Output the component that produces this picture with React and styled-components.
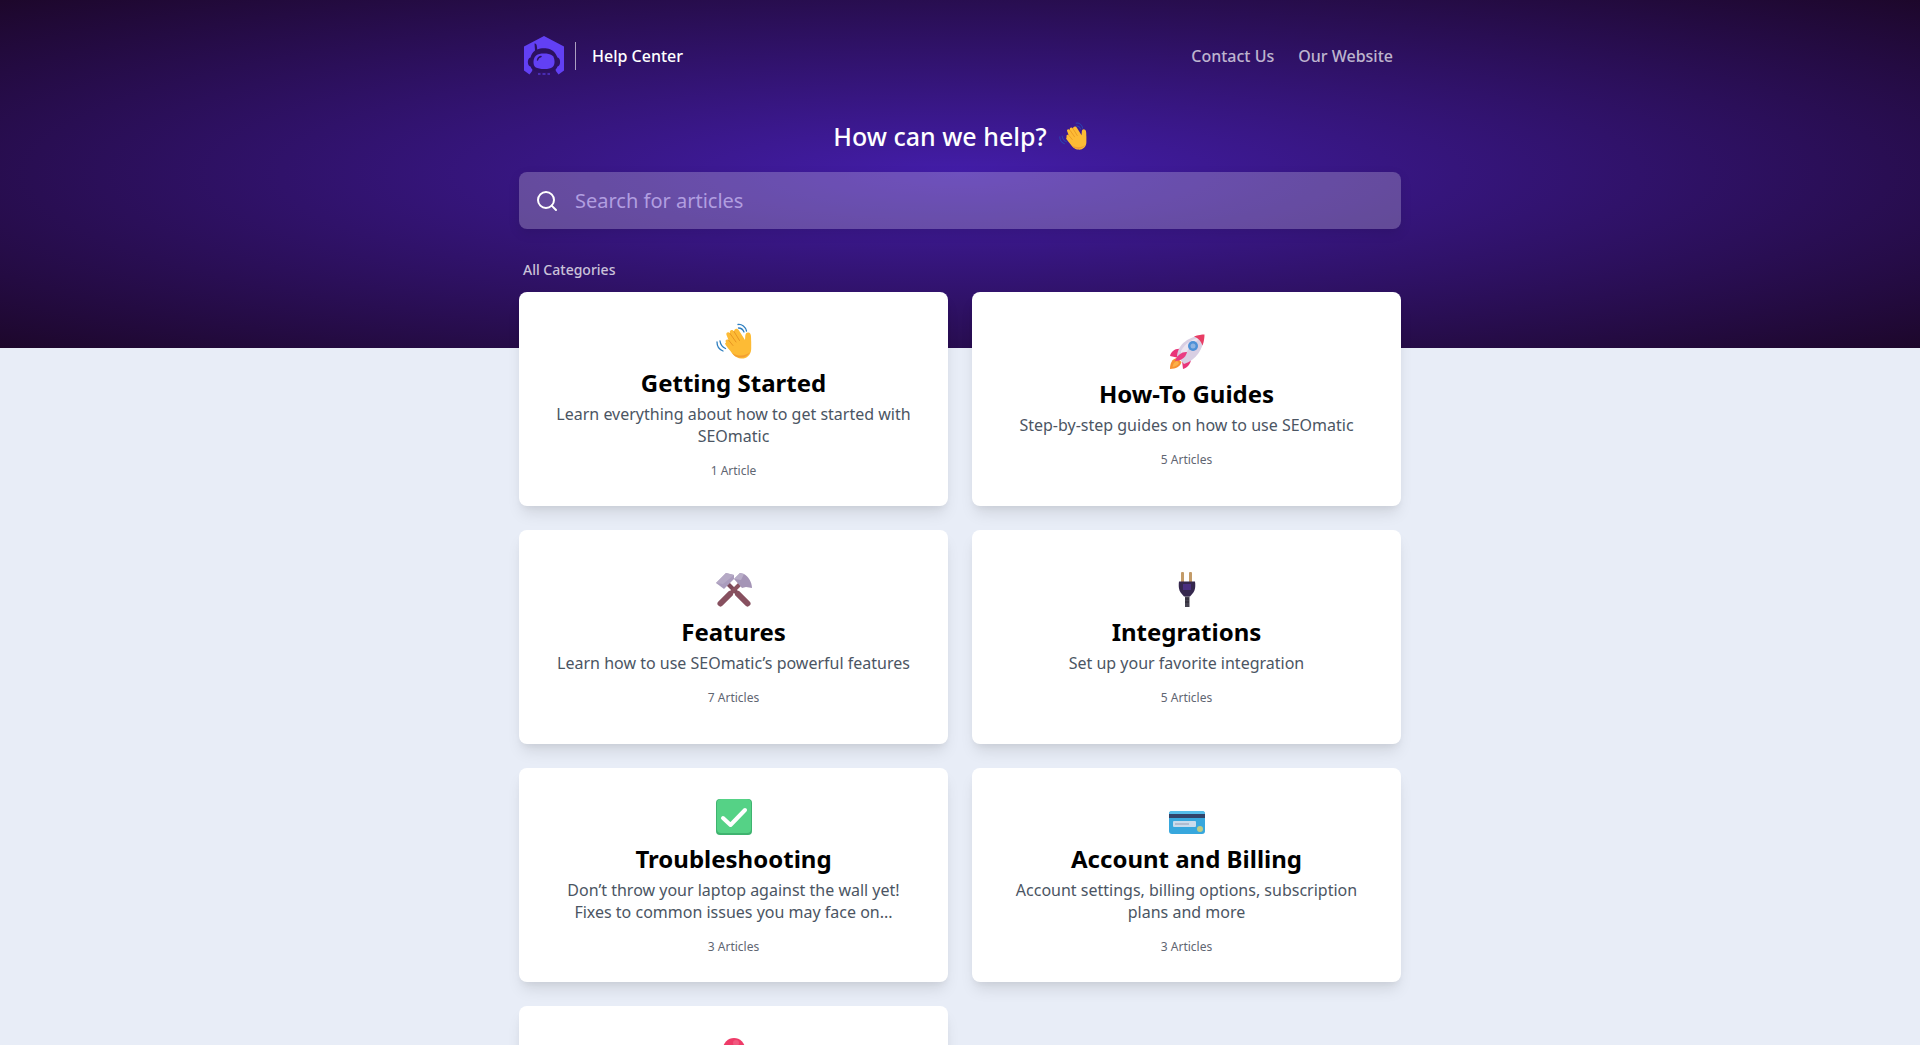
import React from 'react';

// Styles & Icons
import styled, { createGlobalStyle } from 'styled-components';
import { Search } from 'lucide-react';

const Logo = () => (
  <svg width="42" height="42" viewBox="0 0 42 42" aria-hidden="true">
    <path
      d="M21 1 41 11.500V35.500L35.500 39.500C34 37.500 32.500 36 32 33H10C9.500 36 8 37.500 6.500 39.500L1 35.500V11.500Z"
      fill="#6240f4"
    />
    <path
      d="M11.500 8.500C13.500 8 14 10 14.200 14.500C19 12.500 28 12.500 32 18C33.500 20 34 21.500 34.500 22.500C38 23 38 31 34.500 31.500C33 36 29 37 21 37C13 37 9 36 7.500 31.500C4 31 4 23 7.500 22.500C8 20 9.500 17.500 12 15.500Z"
      fill="#2c1160"
    />
    <path
      d="M21 18.500C28 18.500 31.500 20.500 31.500 26.500C31.500 32 29 34 21.500 34C13 34 10.500 32 10.500 27C10.500 21 14 18.500 21 18.500Z"
      fill="#6240f4"
    />
    <path d="M14.500 25C14.800 23 16 22 18 21.500" fill="none" stroke="#2c1160" strokeWidth="1.500" strokeLinecap="round" />
    <path d="M15 39h2.500M19.500 39h3M24.500 39h2.500" stroke="#5236cc" strokeWidth="1.500" />
  </svg>
);

const WaveIcon = ({ size = 36, lines = '#2f7fc0' }) => (
  <svg width={size} height={size} viewBox="0 0 36 36" aria-hidden="true">
    <g fill="none" stroke={lines} strokeWidth="1.300" strokeLinecap="round">
      <path d="M22 1.500C26 1 29.500 4 30.500 8M22.500 5C25 5 27 6.500 28 9" />
      <path d="M1 19C1 23.500 3 26.500 7 28M4 18C4.500 21.500 6 24 9.500 25.500" />
    </g>
    <path
      d="M10 19.500C8.500 17 11 15.500 12.500 17L10.500 12C9.500 9.500 12.500 8 14 10.500C13 7.500 16 5.500 18 8.500C18 5.500 21.500 4.500 23 7.500L29 17C29.500 14 28.500 9 32.500 9.500C35.500 10 35 14 35.200 19V26C35 32.500 30 36 25 35.500C19.500 35 16.500 31 14 27.500C12 25 9.500 22.500 9 20.500Z"
      fill="#fdbb35"
    />
    <path
      d="M14 10.500 20 19M18 8.500 23.500 17.500M12.500 17 17 22.500"
      fill="none"
      stroke="#e89522"
      strokeLinecap="round"
    />
    <path d="M16 30C20 36 30 36.500 34 29C30 33 23 34 16 30Z" fill="#f29e32" />
  </svg>
);

const RocketIcon = () => (
  <svg width="36" height="36" viewBox="0 0 36 36" aria-hidden="true">
    <path d="M8 24C3 25 1 29 1 35C7 34.500 11 33 12.500 28Z" fill="#f79132" />
    <path d="M8 27C5 28 4 30 3.500 33C7 32.500 9 31 10 29Z" fill="#fbb04a" />
    <path d="M12 15C6 14 2 18 1 22L10 24ZM22 25C22 30 18 34 14 35L13 27Z" fill="#e93578" />
    <path d="M8 22C9 10 20 2 35 1C35 15 27 26 15 30Z" fill="#d9cfe3" />
    <path d="M12 17C16 9 25 4 33 3C27 7 19 13 13 26Z" fill="#ece5f0" />
    <path d="M25 2.500C29 1 33 .500 35.500 .500C35.500 3.500 35 8 33.500 11.500C32 7 29.500 4.500 25 2.500Z" fill="#e83d64" />
    <path d="M18 18C13 17.500 8 21 6 27C11 27 17 24 18 18Z" fill="#ea3c82" />
    <circle cx="24" cy="12" r="5" fill="#4e91d7" />
    <circle cx="24" cy="12" r="2.500" fill="#8fb4e2" />
  </svg>
);

const HammerIcon = () => (
  <svg width="36" height="36" viewBox="0 0 36 36" aria-hidden="true">
    <g strokeLinecap="round">
      <path d="M12 12 31 31" stroke="#7c4858" strokeWidth="4" />
      <path d="M24 12 5 31" stroke="#8a5260" strokeWidth="4" />
      <path d="M22 22 31.500 31.500M14 22 4.500 31.500" stroke="#87505f" strokeWidth="6" />
    </g>
    <path d="M0 11 10 1 18 3 18 7 8 17Z" fill="#aa9cbd" />
    <path d="M0 11 10 1 18 3 7 12Z" fill="#b5a9c5" />
    <path d="M18 7 24 1 28 2C32 4 36 10 36 16L30 15 26 16Z" fill="#a494b6" />
    <path d="M18 7 24 1 28 2 25 8Z" fill="#b8adc8" />
  </svg>
);

const PlugIcon = () => (
  <svg width="36" height="36" viewBox="0 0 36 36" aria-hidden="true">
    <rect x="12" y="0" width="3" height="11" rx="1" fill="#c39b68" />
    <rect x="20" y="0" width="3" height="11" rx="1" fill="#c39b68" />
    <path d="M10 9.500H26C26.500 13 26.500 18 24 21L21 24.500H15L12 21C9.500 18 9.500 13 10 9.500Z" fill="#35274d" />
    <path d="M14 12H22V18H14Z" fill="#4a2f80" />
    <path d="M16 24.500H20.500V35H16Z" fill="#44414f" />
    <path d="M16 27H20M16 30H20" stroke="#292431" />
  </svg>
);

const CheckIcon = () => (
  <svg width="36" height="36" viewBox="0 0 36 36" aria-hidden="true">
    <rect width="36" height="36" rx="4" fill="#3fb36f" />
    <rect x="1" y="0" width="34" height="34" rx="4" fill="#55d286" />
    <path d="M7 19 14.500 26 29 11" fill="none" stroke="#fff" strokeWidth="4" strokeLinecap="round" strokeLinejoin="round" />
  </svg>
);

const BillingIcon = () => (
  <svg width="36" height="36" viewBox="0 0 36 36" aria-hidden="true">
    <rect y="12" width="36" height="23" rx="3" fill="#37a7dd" />
    <path d="M3 12H33A3 3 0 0 1 36 15H0A3 3 0 0 1 3 12Z" fill="#55bdea" />
    <path d="M0 15H36V19H0Z" fill="#31436a" />
    <rect x="4" y="22" width="23" height="6" rx="1" fill="#c9dcec" />
    <path d="M6 25H20" stroke="#a6b2c7" strokeWidth="1.500" />
    <circle cx="31" cy="30" r="3" fill="#bdcc87" />
  </svg>
);

const PinIcon = () => (
  <svg width="36" height="36" viewBox="0 0 36 36" aria-hidden="true">
    <path d="M17 22H19L18.500 36H17.500Z" fill="#9b9aa5" />
    <circle cx="18" cy="15" r="11" fill="#ee3b68" />
    <circle cx="20" cy="9" r="3" fill="#f2587f" />
  </svg>
);

const categories = [
  {
    icon: <WaveIcon />,
    title: 'Getting Started',
    text: 'Learn everything about how to get started with SEOmatic',
    count: '1 Article',
  },
  {
    icon: <RocketIcon />,
    title: 'How-To Guides',
    text: 'Step-by-step guides on how to use SEOmatic',
    count: '5 Articles',
  },
  {
    icon: <HammerIcon />,
    title: 'Features',
    text: 'Learn how to use SEOmatic’s powerful features',
    count: '7 Articles',
  },
  {
    icon: <PlugIcon />,
    title: 'Integrations',
    text: 'Set up your favorite integration',
    count: '5 Articles',
  },
  {
    icon: <CheckIcon />,
    title: 'Troubleshooting',
    text: 'Don’t throw your laptop against the wall yet! Fixes to common issues you may face on...',
    count: '3 Articles',
  },
  {
    icon: <BillingIcon />,
    title: 'Account and Billing',
    text: 'Account settings, billing options, subscription plans and more',
    count: '3 Articles',
  },
];

const App = () => {
  return (
    <>
      <GlobalStyle />
      <Header>
        <Container>
          <Nav>
            <Brand href="/">
              <Logo />
              <Divider />
              <span>Help Center</span>
            </Brand>
            <NavLinks>
              <NavLink href="/contact">Contact Us</NavLink>
              <NavLink href="/website">Our Website</NavLink>
            </NavLinks>
          </Nav>
          <Heading>
            How can we help?
            <WaveIcon size={28} lines="#2a44b0" />
          </Heading>
          <SearchBox>
            <Search size={24} strokeWidth={2} />
            <SearchInput type="search" placeholder="Search for articles" aria-label="Search for articles" />
          </SearchBox>
          <SectionTitle>All Categories</SectionTitle>
        </Container>
      </Header>
      <Main>
        <Grid>
          {categories.map(({ icon, title, text, count }) => (
            <Card href="/" key={title}>
              <CardIcon>{icon}</CardIcon>
              <CardTitle>{title}</CardTitle>
              <CardText>{text}</CardText>
              <CardCount>{count}</CardCount>
            </Card>
          ))}
          <Card href="/" $top>
            <CardIcon>
              <PinIcon />
            </CardIcon>
          </Card>
        </Grid>
      </Main>
    </>
  );
};

export default App;

const GlobalStyle = createGlobalStyle`
  * {
    box-sizing: border-box;
  }

  body {
    margin: 0;
    background: #e8edf7;
    font-family: 'Segoe UI', 'Noto Sans', sans-serif;
  }
`;

const Container = styled.div`
  max-width: 882px;
  margin: 0 auto;
`;

const Header = styled.header`
  padding: 32px 16px 68px;
  background: radial-gradient(#431da9, #1d072b);
`;

const Nav = styled.nav`
  display: flex;
  align-items: center;
  justify-content: space-between;
  height: 48px;
  padding: 0 8px 0 4px;
`;

const Brand = styled.a`
  display: flex;
  align-items: center;
  color: #fff;
  font-size: 16px;
  font-weight: 500;
  text-decoration: none;
`;

const Divider = styled.span`
  width: 1px;
  height: 28px;
  margin: 0 16px 0 10px;
  background: rgba(255, 255, 255, 0.6);
`;

const NavLinks = styled.div`
  display: flex;
  gap: 24px;
`;

const NavLink = styled.a`
  color: rgba(255, 255, 255, 0.7);
  font-size: 16px;
  font-weight: 500;
  text-decoration: none;
  &:hover {
    color: #fff;
  }
`;

const Heading = styled.h1`
  display: flex;
  align-items: center;
  justify-content: center;
  gap: 12px;
  margin: 40px 0 20px;
  color: #fff;
  font-size: 25px;
  font-weight: 500;
  line-height: 32px;
`;

const SearchBox = styled.label`
  display: flex;
  align-items: center;
  gap: 16px;
  height: 57px;
  padding: 0 16px;
  border-radius: 8px;
  background: rgba(255, 255, 255, 0.23);
  color: #fff;
  box-shadow: 0 4px 12px rgba(0, 0, 0, 0.1);
`;

const SearchInput = styled.input`
  flex: 1;
  min-width: 0;
  padding: 0;
  border: 0;
  outline: 0;
  background: transparent;
  color: #fff;
  font-family: inherit;
  font-size: 20px;
  line-height: 28px;
  &::placeholder {
    color: #b19ee0;
    opacity: 1;
  }
`;

const SectionTitle = styled.h2`
  margin: 31px 4px 0;
  color: rgba(255, 255, 255, 0.75);
  font-size: 14px;
  font-weight: 500;
  line-height: 20px;
`;

const Main = styled.main`
  padding: 0 16px 24px;
`;

const Grid = styled(Container)`
  display: grid;
  grid-template-columns: 1fr 1fr;
  gap: 24px;
  margin-top: -56px;
  @media (max-width: 700px) {
    grid-template-columns: 1fr;
  }
`;

const Card = styled.a`
  display: flex;
  flex-direction: column;
  align-items: center;
  justify-content: ${({ $top }) => ($top ? 'flex-start' : 'center')};
  min-height: 214px;
  padding: 24px 32px;
  border-radius: 8px;
  background: #fff;
  box-shadow: 0 10px 15px -3px rgba(0, 0, 0, 0.1), 0 4px 6px -2px rgba(0, 0, 0, 0.05);
  text-align: center;
  text-decoration: none;
`;

const CardIcon = styled.span`
  height: 36px;
  margin: 4px 0 8px;
`;

const CardTitle = styled.h3`
  margin: 0 0 4px;
  color: #000;
  font-size: 24px;
  font-weight: 700;
  line-height: 32px;
`;

const CardText = styled.p`
  margin: 0 0 16px;
  color: #4b5563;
  font-size: 16px;
  line-height: 22px;
`;

const CardCount = styled.span`
  color: #5f6672;
  font-size: 12px;
  line-height: 16px;
`;
